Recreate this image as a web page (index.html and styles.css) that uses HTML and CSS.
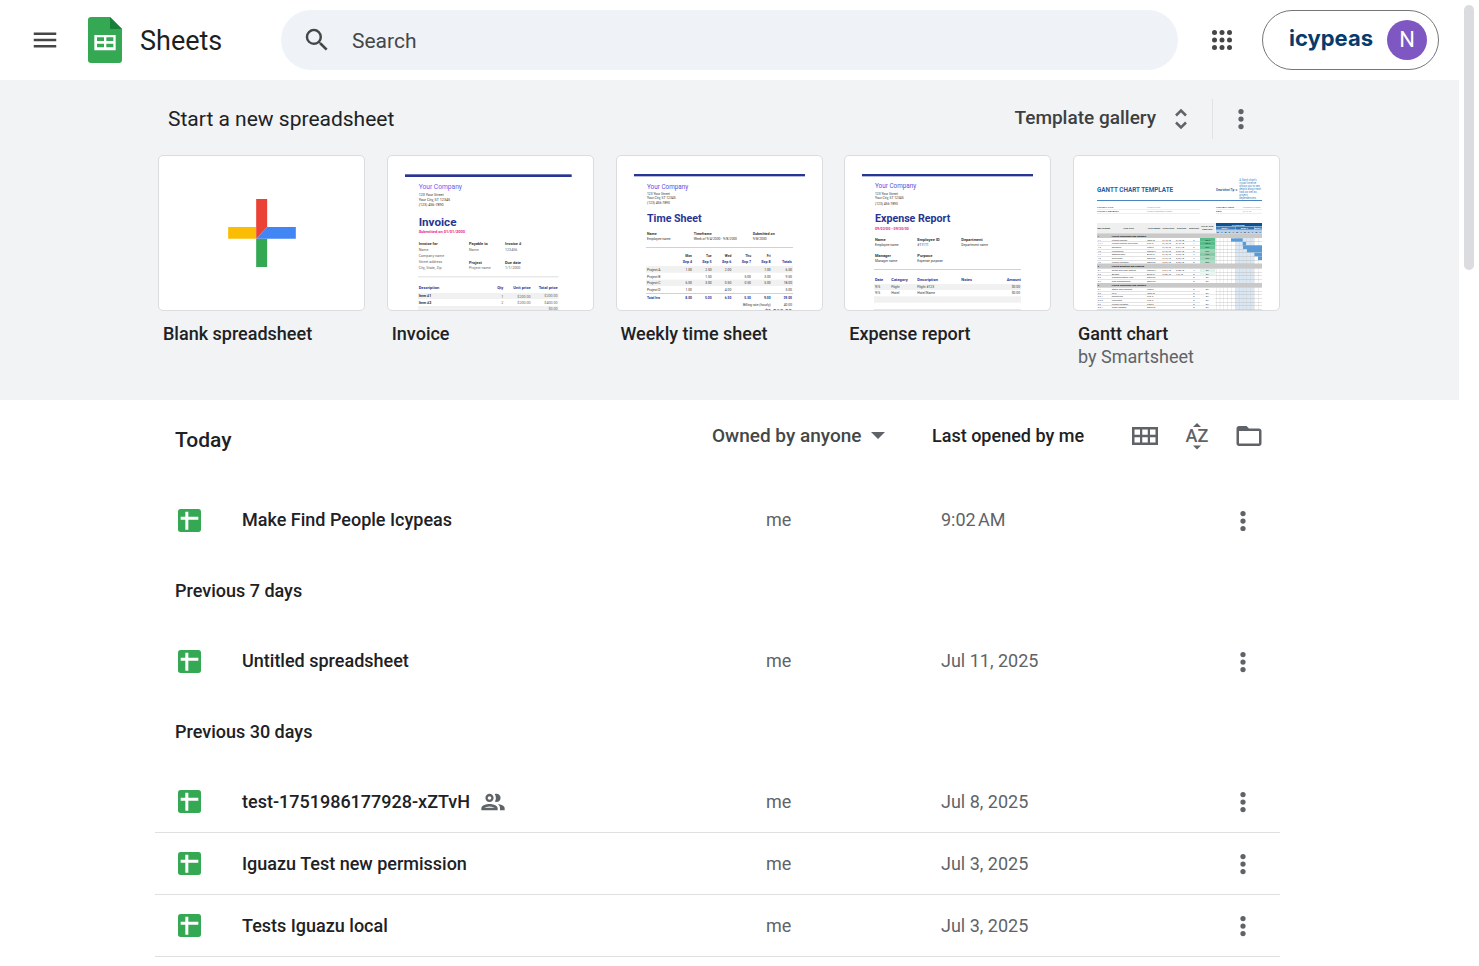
FILE: index.html
```html
<!DOCTYPE html>
<html lang="en">
<head>
<meta charset="UTF-8">
<meta name="viewport" content="width=device-width, initial-scale=1">
<title>Google Sheets</title>
<link rel="stylesheet" href="styles.css">
<script src="script.js" defer></script>
</head>
<body>
<svg class="defs" aria-hidden="true">
  <symbol id="more" viewBox="0 0 24 24"><circle cx="12" cy="6" r="2.1"/><circle cx="12" cy="12" r="2.1"/><circle cx="12" cy="18" r="2.1"/></symbol>
  <symbol id="sheet" viewBox="0 0 69 69"><rect width="69" height="69" rx="8" fill="#34a853"/><path d="M22 8h9v15h30v9H31v30h-9V32H8v-9h14z" fill="#fff"/></symbol>
</svg>

<div class="page">
  <header class="topbar">
    <button class="icon-btn" aria-label="Main menu">
      <svg class="icon" viewBox="0 0 24 24"><path d="M3 18h18v-2H3v2zm0-5h18v-2H3v2zm0-7v2h18V6H3z"/></svg>
    </button>
    <a class="brand" href="#">
      <svg width="34" height="46" viewBox="0 0 102 138">
        <path d="M9 0h57l36 36v93a9 9 0 0 1-9 9H9a9 9 0 0 1-9-9V9a9 9 0 0 1 9-9z" fill="#34a853"/>
        <path d="M66 0l36 36H66z" fill="#188038"/>
        <path fill-rule="evenodd" d="M19 54h64v46H19zM27 61v11h21V61zM55 61v11h21V61zM27 80v11h21V80zM55 80v11h21V80z" fill="#fff"/>
      </svg>
      <span>Sheets</span>
    </a>
    <form class="search">
      <svg class="icon" viewBox="0 0 24 24"><path d="M15.5 14h-.79l-.28-.27A6.47 6.47 0 0 0 16 9.5 6.5 6.5 0 1 0 9.5 16c1.61 0 3.09-.59 4.23-1.57l.27.28v.79l5 4.99L20.49 19l-4.99-5zm-6 0C7.01 14 5 11.99 5 9.5S7.01 5 9.5 5 14 7.01 14 9.5 11.99 14 9.5 14z"/></svg>
      <input type="text" placeholder="Search" aria-label="Search">
    </form>
    <button class="icon-btn apps" aria-label="Google apps">
      <svg class="icon" viewBox="0 0 24 24"><circle cx="6" cy="6" r="2"/><circle cx="12" cy="6" r="2"/><circle cx="18" cy="6" r="2"/><circle cx="6" cy="12" r="2"/><circle cx="12" cy="12" r="2"/><circle cx="18" cy="12" r="2"/><circle cx="6" cy="18" r="2"/><circle cx="12" cy="18" r="2"/><circle cx="18" cy="18" r="2"/></svg>
    </button>
    <button class="account">
      <span class="org">icypeas</span>
      <span class="avatar">N</span>
    </button>
  </header>

  <section class="templates">
    <div class="inner">
      <div class="templates-head">
        <h2>Start a new spreadsheet</h2>
        <button class="gallery"><span>Template gallery</span>
          <svg class="icon" viewBox="0 0 30 30"><path d="M10 11.5l5-5 5 5M10 18.5l5 5 5-5" fill="none" stroke="#5f6368" stroke-width="2.5"/></svg>
        </button>
        <button class="icon-btn more" aria-label="More options"><svg class="icon"><use href="#more"/></svg></button>
      </div>
      <div class="cards">
        <a class="card" href="#">
          <span class="thumb blank">
            <svg width="68" height="68" viewBox="0 0 203 204">
              <path d="M0 84h84v35H0z" fill="#fbbc04"/>
              <path d="M84 119h33v85H84z" fill="#34a853"/>
              <path d="M117 84h86v35H84z" fill="#4285f4"/>
              <path d="M84 0h33v84l-33 35z" fill="#ea4335"/>
            </svg>
          </span>
          <span class="name">Blank spreadsheet</span>
        </a>
        <a class="card" href="#">
          <span class="thumb"><svg id="invoice" viewBox="6 6 615 462"></svg></span>
          <span class="name">Invoice</span>
        </a>
        <a class="card" href="#">
          <span class="thumb"><svg id="timesheet" viewBox="6 6 615 462"></svg></span>
          <span class="name">Weekly time sheet</span>
        </a>
        <a class="card" href="#">
          <span class="thumb"><svg id="expense" viewBox="6 6 615 462"></svg></span>
          <span class="name">Expense report</span>
        </a>
        <a class="card" href="#">
          <span class="thumb"><svg id="gantt" viewBox="6 6 615 462"></svg></span>
          <span class="name">Gantt chart</span>
          <span class="by">by Smartsheet</span>
        </a>
      </div>
    </div>
  </section>

  <main class="inner">
    <table class="docs">
      <colgroup><col><col class="c-owner"><col class="c-date"><col class="c-act"></colgroup>
      <thead>
        <tr>
          <th class="today">Today</th>
          <th>
            <span class="owner-filter">
              <select aria-label="Owner"><option>Owned by anyone</option></select>
              <svg width="14" height="7" viewBox="0 0 14 7"><path d="M0 0h14L7 7z"/></svg>
            </span>
          </th>
          <th class="opened">Last opened by me</th>
          <th>
            <div class="tools">
              <button class="icon-btn" aria-label="Grid view"><svg class="icon" viewBox="0 0 30 30"><path fill-rule="evenodd" d="M2 6h26v18H2zM4.500 8.500v5.250h5.500V8.500zM12.250 8.500v5.250h5.500V8.500zM20 8.500v5.250h5.500V8.500zM4.500 16.250v5.250h5.500v-5.250zM12.250 16.250v5.250h5.500v-5.250zM20 16.250v5.250h5.500v-5.250z"/></svg></button>
              <button class="icon-btn" aria-label="Sort options"><svg class="icon" viewBox="0 0 30 30"><text x="15" y="21" class="az">AZ</text><path d="M11 6l4-4 4 4zM11 24.500l4 4 4-4z"/></svg></button>
              <button class="icon-btn" aria-label="Open file picker"><svg class="icon" viewBox="0 0 24 24"><path d="M20 6h-8l-2-2H4c-1.100 0-1.990.9-1.990 2L2 18c0 1.100.9 2 2 2h16c1.100 0 2-.9 2-2V8c0-1.100-.9-2-2-2zm0 12H4V8h16v10z"/></svg></button>
            </div>
          </th>
        </tr>
      </thead>
      <tbody>
        <tr>
          <td><a class="doc" href="#"><svg class="sheet"><use href="#sheet"/></svg>Make Find People Icypeas</a></td>
          <td class="owner">me</td>
          <td class="date">9:02&#8239;AM</td>
          <td class="act"><button class="icon-btn" aria-label="More actions"><svg class="icon"><use href="#more"/></svg></button></td>
        </tr>
      </tbody>
      <tbody>
        <tr class="group"><th colspan="4">Previous 7 days</th></tr>
        <tr>
          <td><a class="doc" href="#"><svg class="sheet"><use href="#sheet"/></svg>Untitled spreadsheet</a></td>
          <td class="owner">me</td>
          <td class="date">Jul 11, 2025</td>
          <td class="act"><button class="icon-btn" aria-label="More actions"><svg class="icon"><use href="#more"/></svg></button></td>
        </tr>
      </tbody>
      <tbody class="ruled">
        <tr class="group"><th colspan="4">Previous 30 days</th></tr>
        <tr>
          <td><a class="doc" href="#"><svg class="sheet"><use href="#sheet"/></svg>test-1751986177928-xZTvH
            <svg class="shared" viewBox="0 0 24 24"><path d="M9 13.750c-2.340 0-7 1.170-7 3.500V19h14v-1.750c0-2.330-4.660-3.500-7-3.500zM4.340 17c.84-.58 2.870-1.250 4.660-1.250s3.820.67 4.660 1.250H4.340zM9 12c1.930 0 3.500-1.570 3.500-3.500S10.930 5 9 5 5.500 6.570 5.500 8.500 7.070 12 9 12zm0-5c.83 0 1.500.67 1.500 1.500S9.830 10 9 10s-1.500-.67-1.500-1.500S8.170 7 9 7zm7.040 6.810c1.160.84 1.960 1.960 1.960 3.440V19h4v-1.750c0-2.020-3.500-3.170-5.960-3.440zM15 12c1.930 0 3.500-1.570 3.500-3.500S16.930 5 15 5c-.54 0-1.040.13-1.500.35.63.89 1 1.980 1 3.150s-.37 2.260-1 3.150c.46.22.96.35 1.500.35z"/></svg></a></td>
          <td class="owner">me</td>
          <td class="date">Jul 8, 2025</td>
          <td class="act"><button class="icon-btn" aria-label="More actions"><svg class="icon"><use href="#more"/></svg></button></td>
        </tr>
        <tr>
          <td><a class="doc" href="#"><svg class="sheet"><use href="#sheet"/></svg>Iguazu Test new permission</a></td>
          <td class="owner">me</td>
          <td class="date">Jul 3, 2025</td>
          <td class="act"><button class="icon-btn" aria-label="More actions"><svg class="icon"><use href="#more"/></svg></button></td>
        </tr>
        <tr>
          <td><a class="doc" href="#"><svg class="sheet"><use href="#sheet"/></svg>Tests Iguazu local</a></td>
          <td class="owner">me</td>
          <td class="date">Jul 3, 2025</td>
          <td class="act"><button class="icon-btn" aria-label="More actions"><svg class="icon"><use href="#more"/></svg></button></td>
        </tr>
      </tbody>
    </table>
  </main>
</div>
<div class="scrollbar"><div class="scroll-thumb"></div></div>
</body>
</html>
```
FILE: styles.css
```css
* {
  box-sizing: border-box;
}
body {
  margin: 0;
  display: flex;
  height: 100vh;
  overflow: hidden;
  background: #fff;
  color: #202124;
  font: 18px/24px Roboto, "Liberation Sans", sans-serif;
}
button, input, select {
  font: inherit;
  color: inherit;
  border: 0;
  padding: 0;
  background: none;
}
a {
  color: inherit;
  text-decoration: none;
}
.defs {
  position: absolute;
  width: 0;
  height: 0;
}
.page {
  flex: 1;
  min-width: 0;
}
.inner {
  max-width: 1149px;
  margin: 0 auto;
  padding-right: 24px;
}
.icon {
  display: block;
  width: 30px;
  height: 30px;
  fill: #5f6368;
}
.icon-btn {
  flex: none;
}

/* top bar */
.topbar {
  display: flex;
  align-items: center;
  height: 80px;
  padding: 0 20px 0 30px;
}
.topbar .icon {
  fill: #444746;
}
.brand {
  display: flex;
  align-items: center;
  gap: 18px;
  width: 193px;
  margin-left: 28px;
  color: #1f1f1f;
  font-size: 27px;
  line-height: 32px;
}
.brand span {
  padding-top: 2px;
}
.search {
  flex: 1;
  display: flex;
  align-items: center;
  gap: 20px;
  height: 60px;
  padding: 0 21px;
  border-radius: 30px;
  background: #eff3f8;
}
.search input {
  flex: 1;
  min-width: 0;
  padding-top: 2px;
  font-size: 21px;
  outline: 0;
}
.search input::placeholder {
  color: #444746;
  opacity: 1;
}
.apps {
  margin: 0 25px 0 29px;
}
.account {
  display: flex;
  align-items: center;
  justify-content: space-between;
  width: 177px;
  height: 60px;
  padding: 0 11px 0 26px;
  border: 1px solid #747775;
  border-radius: 30px;
}
.org {
  padding-bottom: 4px;
  color: #073b6c;
  font: 700 22px/24px Inter, sans-serif;
}
.avatar {
  width: 40px;
  border-radius: 50%;
  background: #7e57c2;
  color: #fff;
  font-size: 22px;
  line-height: 40px;
}

/* templates */
.templates {
  height: 320px;
  background: #f1f3f4;
}
.templates-head {
  display: flex;
  align-items: center;
  height: 75px;
  padding: 3px 24px 0 13px;
}
.templates-head h2 {
  flex: 1;
  margin: 0;
  font-size: 21px;
  font-weight: 400;
}
.gallery {
  display: flex;
  align-items: center;
  gap: 10px;
  padding-right: 16px;
  color: #3c4043;
  font-size: 19px;
  font-weight: 500;
}
.gallery span {
  padding-bottom: 2px;
}
.more {
  height: 40px;
  padding-left: 13px;
  border-left: 1px solid #e0e2e5;
}
.cards {
  display: flex;
  justify-content: space-between;
  padding-left: 3px;
}
.card {
  width: 207px;
}
.card > span {
  display: block;
}
.thumb {
  height: 156px;
  margin-bottom: 11px;
  border: 1px solid #dadce0;
  border-radius: 5px;
  background: #fff;
  overflow: hidden;
}
.thumb svg {
  display: block;
  font-family: Roboto, sans-serif;
}
.blank svg {
  margin: 43px auto;
}
.name, .by {
  padding-left: 5px;
}
.name {
  font-weight: 500;
}
.by {
  line-height: 22px;
  color: #5f6368;
}

/* document list */
.docs {
  width: 100%;
  table-layout: fixed;
  border-collapse: separate;
  border-spacing: 0;
}
.c-owner {
  width: 220px;
}
.c-date {
  width: 188px;
}
.c-act {
  width: 160px;
}
.docs th, .docs td {
  height: 62px;
  padding: 0;
  text-align: left;
  font-weight: 400;
}
.docs thead th {
  height: 89px;
  padding-bottom: 18px;
  font-weight: 500;
}
.docs thead .today {
  padding: 0 0 9px 20px;
  font-size: 21px;
}
.docs .group th {
  height: 79px;
  padding-left: 20px;
  font-weight: 500;
}
.owner-filter {
  display: flex;
  align-items: center;
  gap: 9px;
  color: #444746;
  font-size: 19px;
}
.owner-filter select {
  appearance: none;
}
.owner-filter svg {
  fill: #5f6368;
}
.tools {
  display: flex;
  justify-content: flex-end;
  gap: 22px;
  padding-right: 16px;
}
.az {
  font-size: 18px;
  font-weight: 500;
  text-anchor: middle;
}
.doc {
  display: flex;
  align-items: center;
  padding-left: 23px;
  color: #202124;
  font-weight: 500;
}
.sheet {
  width: 23px;
  height: 23px;
  margin-right: 41px;
}
.shared {
  width: 28px;
  height: 28px;
  margin-left: 9px;
  fill: #5f6368;
}
.docs .owner {
  padding-left: 54px;
  color: #5f6368;
}
.docs .date {
  padding-left: 9px;
  color: #5f6368;
}
.act .icon-btn {
  display: block;
  margin: 1px 22px 0 auto;
}
.ruled td {
  border-bottom: 1px solid #e0e0e0;
}

/* scrollbar */
.scrollbar {
  flex: none;
  width: 20px;
  padding: 5px;
}
.scroll-thumb {
  width: 10px;
  height: 265px;
  border-radius: 5px;
  background: #dadce0;
}
```
FILE: script.js
```js
'use strict';
// Template previews, drawn in a 615x462 box.
var NAVY = "#283593", GREY = "#666", DARK = "#333", PINK = "#e91e8c", BLUE = "#1f5f9f";

function text(x, y, size, color, str, bold, anchor) {
  return '<text x="' + x + '" y="' + y + '" font-size="' + size + '" fill="' + color +
         '" font-weight="' + (bold ? 700 : 400) + '" text-anchor="' + (anchor || "start") + '">' + str + '</text>';
}
function rect(x, y, w, h, color) {
  return '<rect x="' + x + '" y="' + y + '" width="' + w + '" height="' + h + '" fill="' + color + '"/>';
}
function texts(list, size, color, bold, anchor) {
  return list.map(t => text(t[0], t[1], size, color, t[2], bold, anchor)).join("");
}
function put(id, parts) {
  document.getElementById(id).innerHTML = parts.join("");
}

put("invoice", [
  rect(57, 61, 500, 8, NAVY),
  text(98, 106, 20, "#6a5cf0", "Your Company"),
  texts([[98, 126, "123 Your Street"], [98, 141, "Your City, ST 12345"], [98, 156, "(123) 456-7890"]], 11, DARK),
  text(98, 215, 35, NAVY, "Invoice", true),
  text(98, 238, 12, PINK, "Submitted on 01/01/2000", true),
  texts([[98, 273, "Invoice for"], [249, 273, "Payable to"], [357, 273, "Invoice #"], [249, 329, "Project"], [357, 329, "Due date"]], 12, DARK, true),
  texts([[98, 290, "Name"], [98, 308, "Company name"], [98, 327, "Street address"], [98, 345, "City, State, Zip"],
         [249, 290, "Name"], [357, 290, "123456"], [249, 345, "Project name"], [357, 345, "1/1/2000"]], 11, GREY),
  rect(96, 367, 422, 3, "#ddd"),
  rect(96, 417, 422, 18, "#f1f1f1"), rect(96, 456, 422, 14, "#f1f1f1"),
  text(98, 404, 12, NAVY, "Description", true),
  texts([[352, 404, "Qty"], [434, 404, "Unit price"], [515, 404, "Total price"]], 12, NAVY, true, "end"),
  texts([[98, 429, "Item #1"], [98, 449, "Item #2"]], 11, DARK, true),
  texts([[352, 431, "1"], [434, 431, "$200.00"], [515, 429, "$200.00"], [352, 451, "2"],
         [434, 451, "$200.00"], [515, 449, "$400.00"], [515, 468, "$0.00"]], 11, GREY, false, "end")
]);

function lines(rows, xs) {
  return rows.map(r => texts(r[1].map((v, i) => [xs[i], r[0], v]), 10, DARK, false, "end")).join("");
}
var days = [231, 290, 349, 408, 467, 531];
put("timesheet", [
  rect(57, 60, 513, 7, NAVY),
  text(96, 105, 19, "#5a4fe0", "Your Company"),
  texts([[96, 122, "123 Your Street"], [96, 135, "Your City, ST 12345"], [96, 150, "(123) 456-7890"]], 10, DARK),
  text(96, 204, 32, NAVY, "Time Sheet", true),
  texts([[96, 243, "Name"], [236, 243, "Timeframe"], [413, 243, "Submitted on"]], 11, DARK, true),
  texts([[96, 258, "Employee name"], [236, 258, "Week of 9/4/2000 - 9/8/2000"], [413, 258, "9/8/2000"]], 10, DARK),
  rect(93, 280, 441, 2, "#bbb"),
  texts(["Mon", "Tue", "Wed", "Thu", "Fri"].map((d, i) => [days[i], 310, d]), 10, DARK, true, "end"),
  texts(["Sep 4", "Sep 5", "Sep 6", "Sep 7", "Sep 8", "Totals"].map((d, i) => [days[i], 326, d]), 11, NAVY, true, "end"),
  rect(93, 336, 441, 20, "#f1f1f1"), rect(93, 377, 441, 19, "#f1f1f1"),
  texts([[96, 351, "Project A"], [96, 371, "Project B"], [96, 390, "Project C"], [96, 410, "Project D"]], 10, DARK),
  lines([[351, ["1.00", "2.50", "2.00", "", "1.00", "6.50"]], [371, ["", "1.50", "", "5.00", "3.00", "9.50"]],
         [390, ["6.00", "3.00", "0.50", "0.50", "5.00", "18.00"]], [410, ["1.00", "", "4.00", "", "", "5.00"]]], days),
  rect(93, 417, 441, 2, "#bbb"),
  text(96, 435, 10, NAVY, "Total hrs", true),
  texts(["8.00", "5.00", "6.50", "5.50", "9.00", "39.00"].map((d, i) => [days[i], 435, d]), 10, NAVY, true, "end"),
  texts([[467, 455, "Billing rate (hourly)"], [531, 455, "40.00"]], 10, DARK, false, "end"),
  text(531, 476, 18, PINK, "$1,560.00", true, "end")
]);

put("expense", [
  rect(57, 60, 513, 7, NAVY),
  text(96, 103, 19, "#5a4fe0", "Your Company"),
  texts([[96, 122, "123 Your Street"], [96, 135, "Your City, ST 12345"], [96, 152, "(123) 456-7890"]], 10, DARK),
  text(96, 204, 32, NAVY, "Expense Report", true),
  text(96, 227, 11, PINK, "09/03/00 - 09/30/00", true),
  texts([[96, 260, "Name"], [223, 260, "Employee ID"], [355, 260, "Department"], [96, 309, "Manager"], [223, 309, "Purpose"]], 12, DARK, true),
  texts([[96, 275, "Employee name"], [223, 275, "#11111"], [355, 275, "Department name"], [96, 325, "Manager name"], [223, 325, "Expense purpose"]], 10, DARK),
  rect(93, 345, 441, 2, "#bbb"),
  texts([[96, 380, "Date"], [145, 380, "Category"], [223, 380, "Description"], [355, 380, "Notes"], [491, 380, "Amount"]], 12, NAVY, true),
  rect(93, 390, 441, 18, "#f1f1f1"), rect(93, 427, 441, 19, "#f1f1f1"), rect(93, 465, 441, 3, "#e8e8e8"),
  texts([[96, 402, "9/5"], [145, 402, "Flight"], [223, 402, "Flight #123"], [96, 421, "9/5"], [145, 421, "Hotel"], [223, 421, "Hotel Name"]], 10, DARK),
  texts([[531, 402, "$0.00"], [531, 421, "$0.00"]], 10, DARK, false, "end")
]);

// Gantt: [y, number, title, owner, start, due, duration, percent, fill]
var tasks = [
  [258, "1.1", "Project Charter", "Jane M", "3/12/18", "3/15/18", "3", "100%", "#57bb8a"],
  [269, "1.1.1", "Project Charter Revisions", "Kyle R", "3/15/18", "3/16/18", "1", "100%", "#57bb8a"],
  [280, "1.2", "Research", "Pete S", "3/15/18", "3/21/18", "6", "90%", "#67c295"],
  [291, "1.3", "Projections", "Steven L", "3/16/18", "3/22/18", "6", "60%", "#9ad7b8"],
  [302, "1.4", "Stakeholders", "Allen W", "3/18/18", "3/22/18", "4", "75%", "#81cda6"],
  [313, "1.5", "Guidelines", "Malik M", "3/19/18", "3/23/18", "4", "60%", "#9ad7b8"],
  [324, "1.6", "Project Initiation", "Malik M", "3/23/18", "3/23/18", "0", "50%", "#abdec4"],
  [349, "2.1", "Scope and Goal Setting", "Steven L", "3/24/18", "3/28/18", "4", "5%", "#e0f3ea"],
  [360, "2.2", "Budget", "Allen W", "3/28/18", "4/2/18", "5", "5%", "#e8f6ef"],
  [371, "2.3", "Communication Plan", "Malik M", "", "", "0", "0%", "#fff"],
  [383, "2.4", "Risk Management", "Malik M", "", "", "0", "0%", "#fff"],
  [406, "3.1", "Status and Tracking", "Pete S", "", "", "0", "0%", "#fff"],
  [417, "3.2", "KPIs", "Jane M", "", "", "0", "0%", "#fff"],
  [428, "3.2.1", "Monitoring", "Kyle R", "", "", "0", "0%", "#fff"],
  [439, "3.2.2", "Forecasts", "Kyle R", "", "", "0", "0%", "#fff"],
  [450, "3.3", "Project Updates", "Pete S", "", "", "0", "0%", "#fff"],
  [461, "3.3.1", "Chart Updates", "Malik M", "", "", "0", "0%", "#fff"]
];
var gantt = [
  text(75, 113, 19, BLUE, "GANTT CHART TEMPLATE", true),
  text(432, 110, 8, BLUE, "Smartsheet Tip ➜", true),
  texts(["A Gantt chart's", "visual timeline", "allows you to see", "details about each", "task as well as", "project", "dependencies."]
    .map((s, i) => [502, 82 + i * 9, s]), 8, "#3f83c4"),
  rect(75, 138, 495, 3, "#4a86bd"),
  texts([[75, 161, "PROJECT TITLE"], [75, 173, "PROJECT MANAGER"], [432, 161, "COMPANY NAME"], [432, 173, "DATE"]], 7, DARK),
  texts([[225, 161, "Project's title"], [225, 173, "Project Manager's name"], [512, 161, "Company's name"], [512, 173, "3/12/18"]], 7, "#999"),
  rect(75, 165, 309, 1, "#ccc"), rect(75, 178, 309, 1, "#ccc"), rect(432, 165, 138, 1, "#ccc"), rect(432, 178, 138, 1, "#ccc"),
  rect(75, 207, 356, 31, "#efefef"),
  texts([[95, 224, "WBS NUMBER"], [170, 224, "TASK TITLE"], [246, 224, "TASK OWNER"], [289, 224, "START DATE"], [329, 224, "DUE DATE"],
         [366, 224, "DURATION"], [406, 219, "PCT OF TASK"], [406, 227, "COMPLETE"]], 6, DARK, true, "middle"),
  rect(432, 207, 138, 10, "#0b5394"),
  text(499, 215, 7, "#fff", "PHASE ONE", true, "middle"),
  rect(432, 218, 57, 9, "#3d7ebd"), rect(490, 218, 56, 9, "#2f6fae"), rect(547, 218, 23, 9, "#3d7ebd"),
  texts([[459, 225, "WEEK 1"], [517, 225, "WEEK 2"], [558, 225, "WEEK 3"]], 6, "#fff", true, "middle"),
  rect(432, 228, 138, 10, "#b5d0ea"),
  rect(490, 238, 56, 230, "#dbe8f4")
];
for (var i = 0; i < 12; i++)
  gantt.push(rect(432 + i * 11.5, 238, 1, 230, "#ccc"),
             text(438 + i * 11.5, 236, 6, "#234", "MTWRF"[i % 5], true, "middle"));
tasks.forEach(function(t) {
  gantt.push(rect(384, t[0] - 6, 46, 11, t[8]), rect(75, t[0] + 5, 495, 1, "#aaa"));
  gantt.push(texts([[77, t[0] + 2, t[1]], [119, t[0] + 2, t[2]], [225, t[0] + 2, t[3]], [271, t[0] + 2, t[4]], [311, t[0] + 2, t[5]]], 7, DARK));
  gantt.push(texts([[366, t[0] + 2, t[6]], [406, t[0] + 2, t[7]]], 7, DARK, false, "middle"));
});
[[238, "1", "Project Conception and Initiation"], [330, "2", "Project Definition and Planning"], [387, "3", "Project Conception and Initiation"]].forEach(function(s) {
  gantt.push(rect(75, s[0], 495, 14, "#c9c9c9"), texts([[77, s[0] + 10, s[1]], [119, s[0] + 10, s[2]]], 7, "#000", true));
});
gantt.push(rect(477, 253, 35, 10, "#5b9bd5"), rect(512, 264, 10, 10, "#5b9bd5"), rect(513, 274, 57, 11, "#5b9bd5"),
           rect(525, 285, 45, 10, "#5b9bd5"), rect(547, 296, 23, 11, "#5b9bd5"), rect(558, 307, 12, 11, "#5b9bd5"));
put("gantt", gantt);
```
